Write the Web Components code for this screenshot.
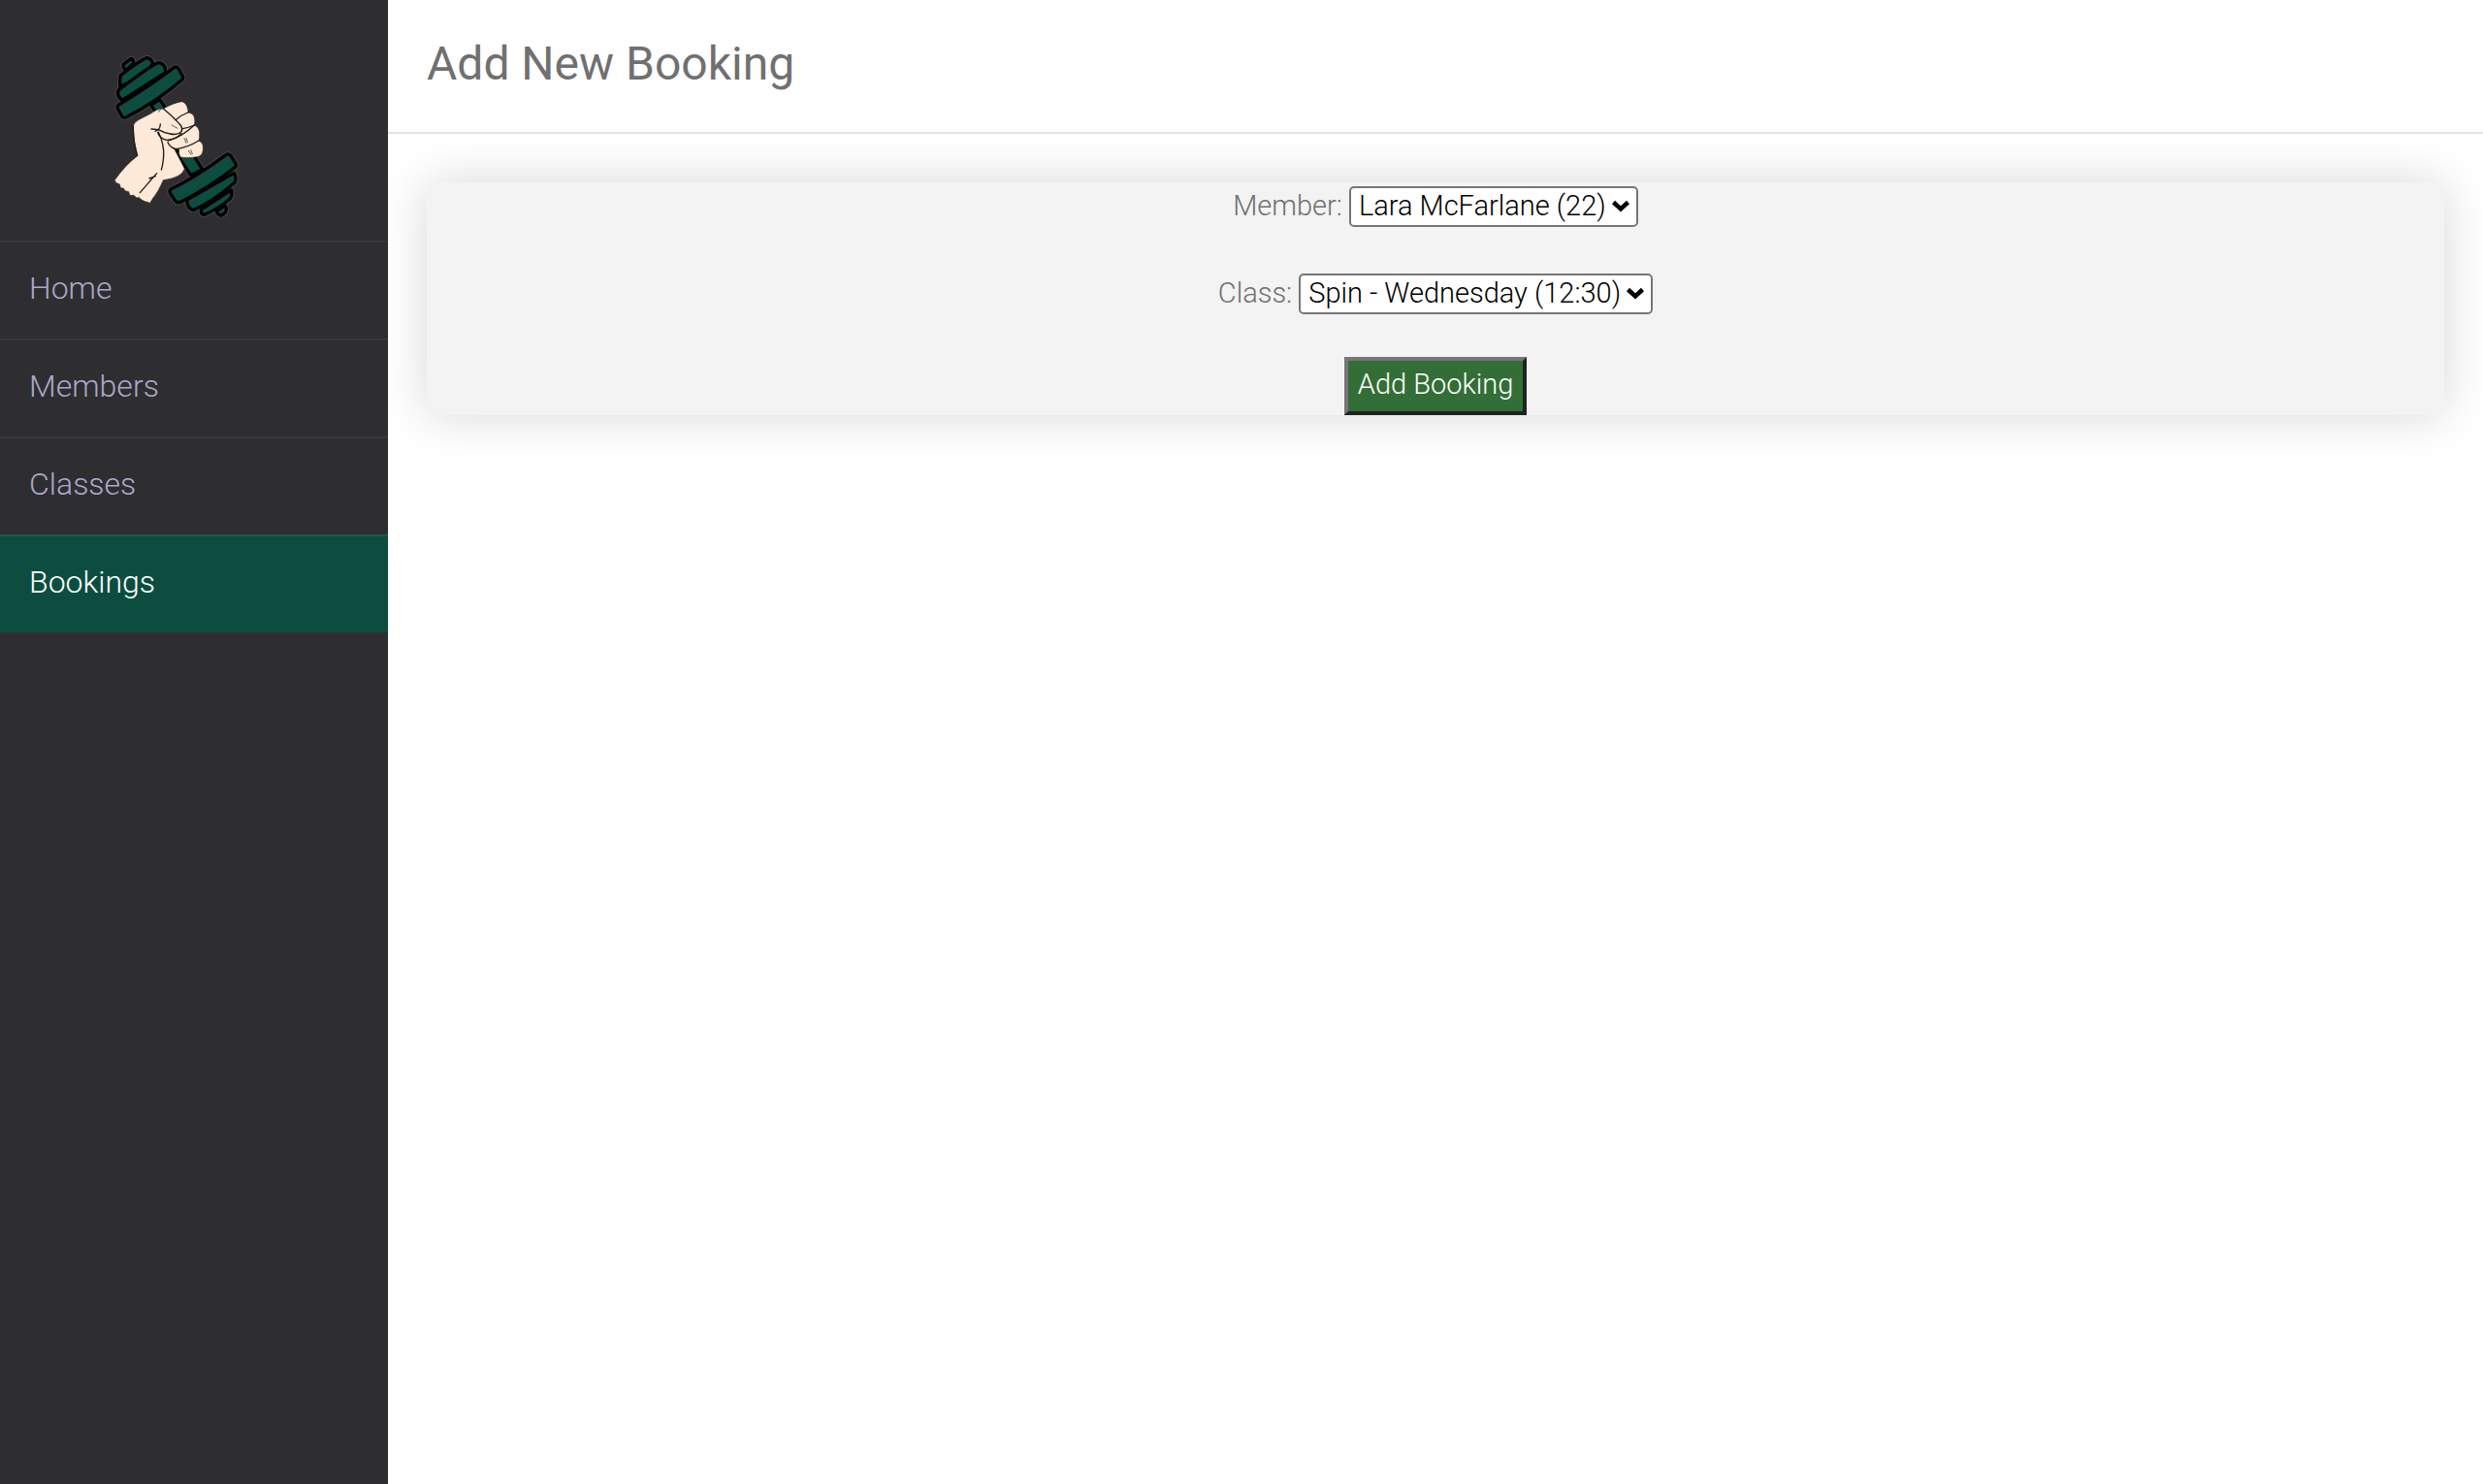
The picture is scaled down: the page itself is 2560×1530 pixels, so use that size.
<!DOCTYPE html>
<html lang="en">
<head>
<meta charset="utf-8">
<title>Add New Booking</title>
<style>
  body { margin: 0; font-family: Roboto, "Liberation Sans", sans-serif; font-weight: 300; color: #707070; background: #fff; }
</style>
</head>
<body>
<gym-app>
  <gym-sidebar slot="sidebar">
    <gym-nav-item href="#home">Home</gym-nav-item>
    <gym-nav-item href="#members">Members</gym-nav-item>
    <gym-nav-item href="#classes">Classes</gym-nav-item>
    <gym-nav-item href="#bookings" active>Bookings</gym-nav-item>
  </gym-sidebar>
  <gym-header slot="header">Add New Booking</gym-header>
  <booking-form></booking-form>
</gym-app>

<script>
const define = (name, html, setup) => customElements.define(name, class extends HTMLElement {
  constructor() {
    super();
    this.attachShadow({ mode: "open" }).innerHTML = html;
  }
  connectedCallback() { if (setup) setup(this, this.shadowRoot); }
});

define("gym-app", `
  <style>
    :host { display: flex; min-height: 100vh; }
    main { flex: 1; min-width: 0; }
    .content { padding: 50px 40px; }
  </style>
  <slot name="sidebar"></slot>
  <main><slot name="header"></slot><div class="content"><slot></slot></div></main>
`);

define("gym-logo", `
  <style>
    :host { display: block; }
    svg { display: block; width: 200px; height: 200px; }
  </style>
  <svg viewBox="0 -48 600 600" role="img" aria-label="Hand lifting a dumbbell">
    <defs>
      <g id="bar" stroke-linejoin="round">
        <path d="M167 205L193 187L218 222L190 240Z"/>
        <path d="M236 340L290 422L326 404L300 362Z"/>
        <path d="M84 77L104 62Q109 60 112 67L114 76L90 97Q84 95 81 84Q80 80 84 77Z"/>
        <path d="M73 113Q140 62 155 59Q168 61 173 76L150 110L72 148Q69 128 73 113Z"/>
        <path d="M67 158Q175 77 190 74Q204 75 211 90L212 104L78 190Q65 180 64 168Z"/>
        <path d="M67 204Q61 209 64 216L77 240Q82 246 90 243Q182 196 263 127Q268 122 265 115L252 92Q247 85 239 88Q160 148 67 204Z"/>
        <path d="M370 534L396 516Q401 520 400 529Q397 543 383 546Q372 544 370 534Z"/>
        <path d="M322 528L416 467Q419 484 411 496Q370 530 331 544Q320 542 322 528Z"/>
        <path d="M278 498L424 415Q432 430 427 443Q360 503 297 530Q278 523 278 498Z"/>
        <path d="M227 466Q223 471 226 477L241 500Q246 508 256 506Q350 459 427 397Q432 392 429 386L414 362Q408 355 400 358Q310 425 227 466Z"/>
      </g>
    </defs>
    <use href="#bar" fill="none" stroke="#55575a" stroke-opacity=".6" stroke-width="16"/>
    <use href="#bar" fill="#0d4d40" stroke="#000" stroke-width="10"/>
    <path fill="#fce9d7" stroke="#2a211c" stroke-width="2" stroke-linejoin="round" d="M54 438Q86 392 125 362Q111 315 112 270Q114 258 130 250L165 232Q185 216 205 216Q237 198 262 194Q277 197 281 218Q283 224 281 228Q298 228 302 246Q304 260 301 267Q316 274 317 290Q318 306 315 315Q331 322 328 345Q325 363 310 365Q275 371 256 365Q251 353 253 344L238 338L271 402Q262 430 205 437Q192 470 172 495Q168 503 162 509Q158 502 152 505L138 498L130 491L122 492L114 484L102 485L98 473L86 470L83 463L73 461L70 450L60 446Z"/>
    <g fill="none" stroke="#211a17" stroke-width="4" stroke-linecap="round" stroke-linejoin="round">
      <path d="M205 216Q229 235 252 260Q268 274 261 287Q250 299 226 294Q205 290 190 281"/>
      <path d="M196 264Q196 274 190 281L168 279M180 286L190 281"/>
      <path d="M188 290Q194 308 215 313Q243 313 261 292"/>
      <path d="M243 251Q258 237 281 228"/>
      <path d="M264 278Q281 276 301 267"/>
      <path d="M220 315Q262 304 301 267"/>
      <path d="M219 320Q225 335 243 341Q279 337 315 315"/>
      <path d="M190 288Q208 327 206 362Q204 390 199 405"/>
      <path d="M133 476L185 416M162 432L181 425"/>
      <path d="M125 362Q111 315 112 270"/>
      <path d="M253 344Q250 356 256 365"/>
      <path stroke-width="2" d="M231 267L249 277M190 226L196 221M270 308L276 322M276 307L280 320M283 346L291 358M290 344L295 356"/>
    </g>
  </svg>
`);

define("gym-sidebar", `
  <style>
    :host { display: block; flex: none; width: 400px; background: #2e2e30; }
    gym-logo { display: flex; justify-content: center; padding: 24px 0; }
    nav { display: flex; flex-direction: column; }
  </style>
  <gym-logo></gym-logo>
  <nav><slot></slot></nav>
`);

define("gym-nav-item", `
  <style>
    :host { display: block; }
    a { display: block; padding: 26px 30px 31px; border-top: 2px solid #38383a; color: #aca7cb;
        font-size: 32px; line-height: 42px; text-decoration: none; }
    :host([active]) a { background: #0d4d40; border-color: #1a5848; color: #fff; }
  </style>
  <a><slot></slot></a>
`, (host, root) => {
  const a = root.querySelector("a");
  a.href = host.getAttribute("href");
  if (host.hasAttribute("active")) a.setAttribute("aria-current", "page");
});

define("gym-header", `
  <style>
    :host { display: block; border-bottom: 2px solid #dfe4e8; }
    h1 { margin: 0; padding: 36px 40px 40px; font-size: 48px; line-height: 60px; font-weight: 400; }
  </style>
  <h1><slot></slot></h1>
`);

define("select-field", `
  <style>
    :host { display: flex; justify-content: center; align-items: center; gap: 7px; padding: 4px 0 44px; }
    label { padding-bottom: 2px; font-size: 29px; line-height: 38px; }
    .box { display: grid; align-items: center; }
    select, svg { grid-area: 1 / 1; }
    select { appearance: none; box-sizing: border-box; margin: 0; padding: 0 31px 2px 8px; height: 42px; border: 2px solid #767676; border-radius: 5px;
             background: #fff; color: #000; font: inherit; font-size: 29px; line-height: 36px; }
    svg { justify-self: end; width: 20px; height: 14px; margin-right: 8px; pointer-events: none; }
  </style>
  <label for="choice"></label>
  <span class="box">
    <select id="choice"><option></option></select>
    <svg viewBox="0 0 20 14" aria-hidden="true"><path d="M2.5 2.5L10 9.5L17.5 2.5" fill="none" stroke="#000" stroke-width="4.5"/></svg>
  </span>
`, (host, root) => {
  root.querySelector("label").textContent = host.getAttribute("label");
  root.querySelector("option").textContent = host.getAttribute("value");
});

define("booking-form", `
  <style>
    :host { display: block; background: #f3f3f3; border-radius: 16px; box-shadow: 0 0 50px rgba(0, 0, 0, .16); }
    form { display: flex; flex-direction: column; align-items: center; }
    button { margin: 0; padding: 5px 10px 9px; border: 4px solid; border-color: #767676 #212121 #212121 #767676; border-radius: 0;
             background: #336e37; color: #fff; font: inherit; font-size: 29px; line-height: 38px; }
  </style>
  <form>
    <select-field label="Member:" value="Lara McFarlane (22)"></select-field>
    <select-field label="Class:" value="Spin - Wednesday (12:30)"></select-field>
    <button type="button">Add Booking</button>
  </form>
`);
</script>
</body>
</html>
